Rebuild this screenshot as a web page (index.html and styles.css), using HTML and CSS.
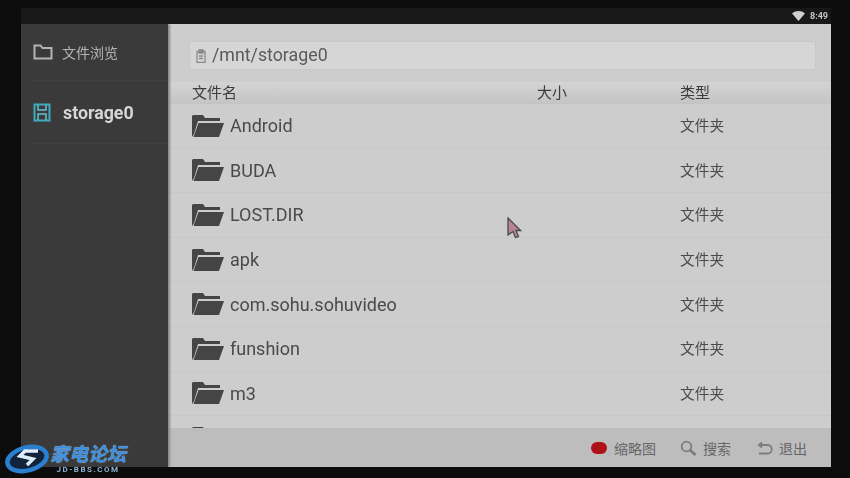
FILE: index.html
```html
<!DOCTYPE html>
<html lang="en">
<head>
    <meta charset="UTF-8">
    <title>文件浏览</title>
    <link rel="stylesheet" href="styles.css">
</head>
<body>
    <svg width="0" height="0" class="defs">
        <symbol id="folder" viewBox="0 0 32 24">
            <path fill="#454545" d="M0 2 1 1h10l2 3h15v3H6L2 20 0 23z"/>
            <path fill="#454545" d="M6.500 9H32L27 23H1.500z"/>
        </symbol>
    </svg>

    <div class="screen">
        <div class="status-bar">
            <svg class="wifi" width="13" height="10" viewBox="0 0 13 10"><path fill="#cfcfcf" d="M0 2.500C3.500-.8 9.500-.8 13 2.500L6.500 10z"/></svg>
            <span class="clock">8:49</span>
        </div>

        <div class="app">
            <nav class="sidebar">
                <div class="side-item browse">
                    <svg width="20" height="16" viewBox="0 0 20 16"><path fill="none" stroke="#b4b4b4" stroke-width="2" d="M1.500 14.500V1.500h6l2 2.500h9v10.500z"/></svg>
                    <span>文件浏览</span>
                </div>
                <div class="side-item drive">
                    <svg width="18" height="19" viewBox="0 0 18 19"><path fill="none" stroke="#3fa9bd" stroke-width="2" d="M1.500 1.500h15v16h-15z"/><path fill="none" stroke="#63c3d2" stroke-width="1.500" d="M5 2v5h8V2M5 17v-6h8v6"/></svg>
                    <span>storage0</span>
                </div>
            </nav>

            <main class="content">
                <div class="path-wrap">
                    <div class="path-bar">
                        <svg width="10" height="14" viewBox="0 0 10 14"><path fill="none" stroke="#8a8a8a" stroke-width="1.300" d="M1 2.500h8v11H1zM3 1h4v3H3zM3 7h4M3 9.500h4"/></svg>
                        <span>/mnt/storage0</span>
                    </div>
                </div>

                <div class="table-head">
                    <span class="col-name">文件名</span>
                    <span class="col-size">大小</span>
                    <span class="col-type">类型</span>
                </div>

                <div class="file-list">
                    <div class="file-row"><svg class="folder"><use href="#folder"/></svg><span class="col-name">Android</span><span class="col-size"></span><span class="col-type">文件夹</span></div>
                    <div class="file-row"><svg class="folder"><use href="#folder"/></svg><span class="col-name">BUDA</span><span class="col-size"></span><span class="col-type">文件夹</span></div>
                    <div class="file-row"><svg class="folder"><use href="#folder"/></svg><span class="col-name">LOST.DIR</span><span class="col-size"></span><span class="col-type">文件夹</span></div>
                    <div class="file-row"><svg class="folder"><use href="#folder"/></svg><span class="col-name">apk</span><span class="col-size"></span><span class="col-type">文件夹</span></div>
                    <div class="file-row"><svg class="folder"><use href="#folder"/></svg><span class="col-name">com.sohu.sohuvideo</span><span class="col-size"></span><span class="col-type">文件夹</span></div>
                    <div class="file-row"><svg class="folder"><use href="#folder"/></svg><span class="col-name">funshion</span><span class="col-size"></span><span class="col-type">文件夹</span></div>
                    <div class="file-row"><svg class="folder"><use href="#folder"/></svg><span class="col-name">m3</span><span class="col-size"></span><span class="col-type">文件夹</span></div>
                    <div class="file-row"><svg class="folder"><use href="#folder"/></svg></div>
                </div>

                <div class="action-bar">
                    <div class="action thumbs"><i class="red-dot"></i><span>缩略图</span></div>
                    <div class="action">
                        <svg width="17" height="16" viewBox="0 0 17 16"><circle cx="6.500" cy="6.500" r="4.800" fill="none" stroke="#7c7c7c" stroke-width="1.800"/><path stroke="#7c7c7c" stroke-width="2.600" d="M10 10l5.500 5"/></svg>
                        <span>搜索</span>
                    </div>
                    <div class="action">
                        <svg width="16" height="14" viewBox="0 0 16 14"><path fill="none" stroke="#7c7c7c" stroke-width="1.800" d="M5 1.500 1.800 4 5 6.500M2 4h8.500a4 4 0 0 1 0 8.500H2"/></svg>
                        <span>退出</span>
                    </div>
                </div>
            </main>
        </div>
    </div>

    <!-- mouse pointer from the capture -->
    <svg class="cursor" width="15" height="22" viewBox="0 0 15 22"><path fill="#b98497" stroke="#4a4a4a" stroke-width="1.300" d="M1 1l12.500 12.500H9l2.500 6-3 1-2.500-6L1 18z"/></svg>

    <!-- forum watermark -->
    <div class="watermark">
        <svg width="44" height="32" viewBox="0 0 44 32">
            <ellipse cx="22" cy="16" rx="20" ry="11.500" transform="rotate(-14 22 16)" fill="#12233a" stroke="#2a7fd0" stroke-width="4.500"/>
            <path fill="none" stroke="#dfeefa" stroke-width="3.500" d="M33 8H20l-5 5 13 3-6 6"/>
        </svg>
        <div class="mark-text">
            <span class="mark-title">家电论坛</span>
            <span class="mark-url">JD-BBS.COM</span>
        </div>
    </div>
</body>
</html>
```

FILE: styles.css
```css
html, body {
    margin: 0;
    height: 100%;
}

body {
    background-color: #0c0c0c;
    font-family: Roboto, "Noto Sans CJK SC", sans-serif;
    position: relative;
    overflow: hidden;
    padding: 8px 19px 11px 21px;
    box-sizing: border-box;
}

.defs {
    position: absolute;
}

/* the capture is soft, so take the edge off everything */
.screen,
.cursor,
.watermark {
    filter: blur(0.45px);
}

.screen {
    height: 100%;
    display: flex;
    flex-direction: column;
}

/* Status bar */
.status-bar {
    height: 16px;
    background-color: #181818;
    display: flex;
    align-items: center;
    justify-content: flex-end;
    gap: 5px;
    padding-right: 3px;
}

.clock {
    color: #c4c4c4;
    font-size: 9px;
    font-weight: 700;
}

.app {
    flex: 1;
    display: flex;
    min-height: 0;
    overflow: hidden;
}

/* Sidebar */
.sidebar {
    width: 147px;
    background-color: #3a3a3a;
    box-shadow: 2px 0 2px #8a8a8a;
    position: relative;
    z-index: 1;
}

.side-item {
    margin-left: 12px;
    display: flex;
    align-items: center;
}

.side-item.browse {
    height: 56px;
    border-bottom: 1px solid #404040;
    gap: 9px;
    color: #b4b4b4;
    font-size: 14px;
}

.side-item.drive {
    height: 62px;
    border-bottom: 1px solid #404040;
    gap: 12px;
    color: #d6d6d6;
    font-size: 17.800px;
    font-weight: 700;
}

/* Main panel */
.content {
    flex: 1;
    min-width: 0;
    background-color: #cdcdcd;
    display: flex;
    flex-direction: column;
}

.path-wrap {
    height: 58px;
    padding: 17px 15px 0 21px;
    box-sizing: border-box;
}

.path-bar {
    height: 27px;
    background-color: #d6d6d6;
    border: 1px solid #c8c8c8;
    border-radius: 2px;
    display: flex;
    align-items: center;
    gap: 6px;
    padding-left: 6px;
    color: #5a5a5a;
    font-size: 17.800px;
}

.path-bar span {
    padding-bottom: 2px;
}

.table-head {
    height: 22px;
    background: linear-gradient(#d4d4d4, #c4c4c4);
    display: flex;
    align-items: center;
    padding-left: 24px;
    padding-bottom: 4px;
    box-sizing: border-box;
    color: #3c3c3c;
    font-size: 15px;
}

.table-head .col-name {
    width: 345px;
}

.table-head .col-size {
    width: 143px;
}

.file-list {
    flex: 1;
    min-height: 0;
    overflow: hidden;
}

.file-row {
    height: 44.600px;
    box-sizing: border-box;
    border-bottom: 1px solid #c7c7c7;
    display: flex;
    align-items: center;
    padding-left: 24px;
    color: #4a4a4a;
    font-size: 18px;
}

.folder {
    width: 32px;
    height: 24px;
    margin-right: 6px;
}

.file-row .col-name {
    width: 307px;
}

.file-row .col-size {
    width: 143px;
}

.file-row .col-type {
    font-size: 14.700px;
    padding-bottom: 2px;
}

/* Bottom actions */
.action-bar {
    height: 39px;
    background-color: #bdbdbd;
    display: flex;
    align-items: center;
    justify-content: flex-end;
    gap: 26px;
    padding-right: 24px;
    color: #666;
    font-size: 14px;
}

.action {
    display: flex;
    align-items: center;
    gap: 6px;
}

.action.thumbs {
    gap: 7px;
    margin-right: -2px;
}

.red-dot {
    width: 16px;
    height: 12px;
    border-radius: 6px;
    background-color: #b01018;
}

/* Overlays */
.cursor {
    position: absolute;
    left: 507px;
    top: 217px;
}

.watermark {
    position: absolute;
    z-index: 2;
    left: 5px;
    top: 443px;
    display: flex;
    gap: 1px;
}

.mark-text {
    display: flex;
    flex-direction: column;
    align-items: center;
}

.mark-title {
    color: #3b8fe0;
    font-size: 19px;
    font-weight: 700;
    font-style: italic;
    line-height: 23px;
    text-shadow: 0 0 1px #cfe4f8;
}

.mark-url {
    color: #8fb4d8;
    font-size: 8px;
    font-weight: 700;
    letter-spacing: 1.500px;
    line-height: 8px;
}
```
